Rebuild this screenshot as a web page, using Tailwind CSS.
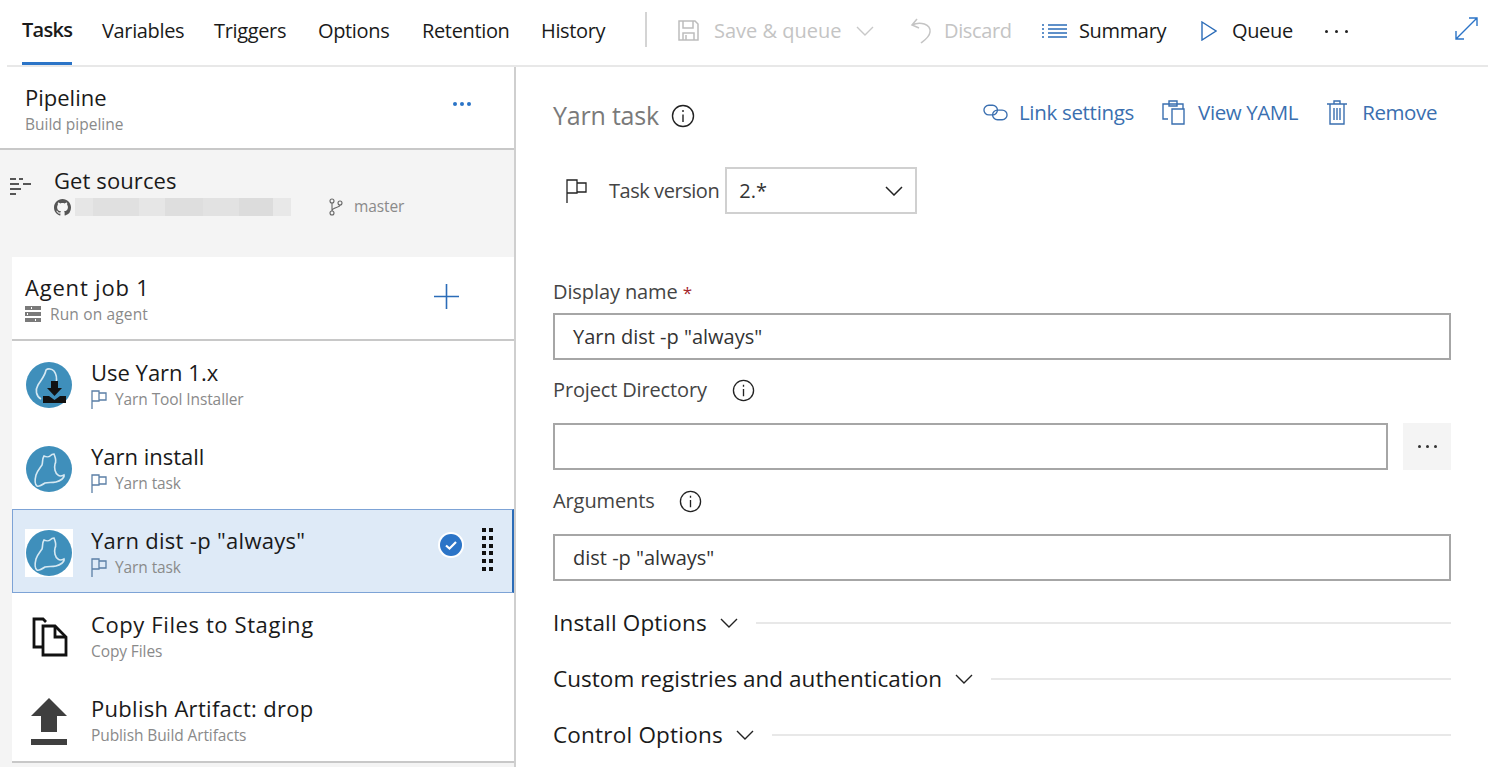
<!DOCTYPE html>
<html lang="en"><head><meta charset="utf-8"><script src="https://cdn.jsdelivr.net/npm/@tailwindcss/browser@4"></script><title>Yarn task</title></head>
<body class="bg-white">
<div class="w-[1488px] h-[767px] overflow-hidden font-['Open_Sans',sans-serif] text-[#1a1a1a]">
  <!-- top bar -->
  <header class="ml-[7px] h-[67px] border-b-2 border-[#e8e8e8] flex text-[20px] tracking-[-0.35px]">
    <div class="w-[50px] ml-[15px] h-[65px] flex items-center font-semibold border-b-[3px] border-[#2b74c7] pb-[2px] whitespace-nowrap tracking-[-0.7px]">Tasks</div>
    <div class="w-[112px] flex items-center ml-[30px] pb-[4px]">Variables</div>
    <div class="w-[104px] flex items-center pb-[4px]">Triggers</div>
    <div class="w-[104px] flex items-center pb-[4px]">Options</div>
    <div class="w-[119px] flex items-center pb-[4px]">Retention</div>
    <div class="w-[104px] flex items-center pb-[4px]">History</div>
    <div class="w-[2px] h-[35px] mt-[12px] bg-[#d4d4d4] mr-[31px]"></div>
    <div class="w-[232px] flex items-center gap-[13px] text-[#c4c4c4] pb-[4px]">
      <svg class="w-[21px] h-[21px] mr-[2px]" viewBox="0 0 21 21" fill="none" stroke="#bdbdbd" stroke-width="1.5"><path d="M1 1h16l3 3v16H1zM5 1v7h10V1M5 20v-7h11v7M8 15v5"/></svg>
      <span class="w-[129px] whitespace-nowrap tracking-[0px]">Save &amp; queue</span>
      <svg class="w-[18px] h-[10px]" viewBox="0 0 18 10" fill="none" stroke="#c8c8c8" stroke-width="1.4"><path d="M1 1l8 8 8-8"/></svg>
    </div>
    <div class="w-[132px] flex items-center gap-[12px] text-[#c4c4c4] pb-[4px]">
      <svg class="w-[22px] h-[26px]" viewBox="0 0 22 26" fill="none" stroke="#c4c4c4" stroke-width="1.5"><path d="M7 1L2 7l7 3M2 7c8-4 19-1 18 7-.5 5-5 8-9 11"/></svg>
      <span>Discard</span>
    </div>
    <div class="w-[159px] flex items-center gap-[12px] pb-[4px]">
      <svg class="w-[25px] h-[16px]" viewBox="0 0 25 16" fill="none" stroke="#2b6cb8" stroke-width="1.4"><path d="M6 2h19M6 6h19M6 10h19M6 14h19M0 2h2M0 6h2M0 10h2M0 14h2" /></svg>
      <span>Summary</span>
    </div>
    <div class="w-[124px] flex items-center gap-[15px] pb-[4px]">
      <svg class="w-[16px] h-[20px]" viewBox="0 0 16 20" fill="none" stroke="#2b6cb8" stroke-width="1.4"><path d="M1 1l14 9-14 9z"/></svg>
      <span>Queue</span>
    </div>
    <div class="w-[130px] flex items-center gap-[7px] pb-[3px]">
      <span class="w-[3px] h-[3px] rounded-full bg-[#222]"></span><span class="w-[3px] h-[3px] rounded-full bg-[#222]"></span><span class="w-[3px] h-[3px] rounded-full bg-[#222]"></span>
    </div>
    <svg class="w-[23px] h-[23px] mt-[17px]" viewBox="0 0 23 23" fill="none" stroke="#2b74c7" stroke-width="1.4"><path d="M1 22L22 1M14 1h8v8M1 14v8h8"/></svg>
  </header>

  <div class="flex h-[700px]">
    <!-- left panel -->
    <aside class="w-[516px] shrink-0 border-r-2 border-[#cfcfcf]">
      <div class="h-[83px] border-b-2 border-[#c8c8c8] flex justify-between pl-[25px] pr-[43px]">
        <div class="pt-[15px]">
          <div class="text-[22px] leading-[30px]">Pipeline</div>
          <div class="text-[15.500px] leading-[20px] text-[#8a8a8a] mt-[2px]">Build pipeline</div>
        </div>
        <div class="flex gap-[3px] pt-[35px]">
          <span class="w-[4px] h-[4px] rounded-full bg-[#2b74c7]"></span><span class="w-[4px] h-[4px] rounded-full bg-[#2b74c7]"></span><span class="w-[4px] h-[4px] rounded-full bg-[#2b74c7]"></span>
        </div>
      </div>
      <div class="bg-[#f4f4f4] pl-[12px] h-[617px]">
        <div class="h-[107px] -ml-[12px] flex">
          <svg class="w-[22px] h-[18px] ml-[10px] mt-[27px] shrink-0" viewBox="0 0 22 18" fill="none" stroke="#222" stroke-width="1.5"><path d="M0 2h6M9 2h4M0 7h9M13 7h8M0 12h11M0 17h6"/></svg>
          <div class="ml-[22px] pt-[15px]">
            <div class="text-[22px] leading-[30px] tracking-[0.1px]">Get sources</div>
            <div class="flex items-center text-[15.500px] text-[#8a8a8a] h-[20px] mt-[2px]">
              <svg class="w-[17px] h-[17px]" viewBox="0 0 16 16" fill="#555"><path d="M8 0C3.58 0 0 3.58 0 8c0 3.54 2.29 6.53 5.47 7.59.4.07.55-.17.55-.38 0-.19-.01-.82-.01-1.49-2.01.37-2.53-.49-2.69-.94-.09-.23-.48-.94-.82-1.13-.28-.15-.68-.52-.01-.53.63-.01 1.08.58 1.23.82.72 1.21 1.87.87 2.33.66.07-.52.28-.87.51-1.07-1.78-.2-3.64-.89-3.64-3.95 0-.87.31-1.59.82-2.15-.08-.2-.36-1.02.08-2.12 0 0 .67-.21 2.2.82.64-.18 1.32-.27 2-.27s1.36.09 2 .27c1.53-1.04 2.2-.82 2.2-.82.44 1.1.16 1.92.08 2.12.51.56.82 1.27.82 2.15 0 3.07-1.87 3.75-3.65 3.95.29.25.54.73.54 1.48 0 1.07-.01 1.93-.01 2.2 0 .21.15.46.55.38A8.01 8.01 0 0 0 16 8c0-4.42-3.58-8-8-8z"/></svg>
              <div class="w-[216px] h-[18px] ml-[4px] flex">
                <i class="w-[18px] bg-[#e6e6e6]"></i><i class="w-[46px] bg-[#e0e0e0]"></i><i class="w-[26px] bg-[#e6e6e6]"></i><i class="w-[38px] bg-[#dedede]"></i><i class="w-[36px] bg-[#e2e2e2]"></i><i class="w-[34px] bg-[#dcdcdc]"></i><i class="w-[18px] bg-[#e8e8e8]"></i>
              </div>
              <svg class="w-[14px] h-[18px] ml-[38px]" viewBox="0 0 14 18" fill="none" stroke="#666" stroke-width="1.1"><circle cx="3" cy="3" r="2"/><circle cx="3" cy="15" r="2"/><circle cx="11" cy="5" r="2"/><path d="M3 5v8M11 7c0 3-8 2-8 6"/></svg>
              <span class="ml-[11px] tracking-[-0.1px]">master</span>
            </div>
          </div>
        </div>
        <div class="bg-white h-[506px]">
          <div class="h-[84px] border-b-2 border-[#c8c8c8] flex justify-between pl-[13px] pr-[55px]">
            <div class="pt-[15px]">
              <div class="text-[22px] leading-[30px] tracking-[0.8px]">Agent job 1</div>
              <div class="flex items-center gap-[9px] text-[15.500px] leading-[20px] text-[#8a8a8a] tracking-[0.15px] mt-[2px]">
                <svg class="w-[16px] h-[17px]" viewBox="0 0 16 17" fill="#7a7a7a"><path d="M0 0h16v4H0zM0 6h16v4H0zM0 12h16v4H0z"/><path d="M6 1h1v2H6zM2 7h1v2H2zM10 13h1v2h-1z" fill="#fff"/></svg>
                <span>Run on agent</span>
              </div>
            </div>
            <svg class="w-[25px] h-[25px] mt-[27px]" viewBox="0 0 25 25" stroke="#2b6cb8" stroke-width="1.6"><path d="M0 12.5h25M12.5 0v25"/></svg>
          </div>
          <!-- rows -->
          <div class="h-[84px] flex pl-[13px]">
            <div class="w-[48px] h-[48px] mt-[20px] relative shrink-0">
              <svg class="w-[48px] h-[48px]" viewBox="0 0 48 48"><circle cx="24" cy="24" r="23" fill="#3f8fbb"/><path d="M31 22c1-4 1-8-2-12-2-2-6-3-8-1-1 6-5 10-8 15-3 5-2 11 3 14" fill="none" stroke="#d5e8f2" stroke-width="1.6"/></svg>
              <svg class="absolute left-[18px] top-[20px] w-[23px] h-[23px]" viewBox="0 0 23 23" fill="#111"><path d="M8 0h7v7h4l-7.500 8-7.500-8h4zM0 15h6l5.500 4 5.500-4h6v7H0z"/></svg>
            </div>
            <div class="ml-[18px] pt-[16px]">
              <div class="text-[22px] leading-[30px]">Use Yarn 1.x</div>
              <div class="flex items-center gap-[8px] text-[15.500px] leading-[20px] text-[#8a8a8a] tracking-[-0.1px] mt-[2px]">
                <svg class="w-[16px] h-[19px]" viewBox="0 0 16 19" fill="none" stroke="#5b7fa6" stroke-width="1.3"><path d="M1 19V1h7v10H1M8 3h7v7H8"/></svg>
                <span>Yarn Tool Installer</span>
              </div>
            </div>
          </div>
          <div class="h-[84px] flex pl-[13px]">
            <svg class="w-[48px] h-[48px] mt-[20px] shrink-0" viewBox="0 0 48 48"><circle cx="24" cy="24" r="23" fill="#3f8fbb"/><path d="M19 11c2 1 5 1 6 0 1-1 3-2 4-2 1 3 3 6 1 10-1 4 0 9 3 11 2 2 4 1 6 0 1 3-4 6-8 7-4 1-8 0-11 1-3 2-6 4-8 3-3-2-2-7-1-11 1-4 4-7 6-10 1-3 0-6 2-9z" fill="none" stroke="#d5e8f2" stroke-width="1.6"/></svg>
            <div class="ml-[18px] pt-[16px]">
              <div class="text-[22px] leading-[30px]">Yarn install</div>
              <div class="flex items-center gap-[8px] text-[15.500px] leading-[20px] text-[#8a8a8a] tracking-[-0.1px] mt-[2px]">
                <svg class="w-[16px] h-[19px]" viewBox="0 0 16 19" fill="none" stroke="#5b7fa6" stroke-width="1.3"><path d="M1 19V1h7v10H1M8 3h7v7H8"/></svg>
                <span>Yarn task</span>
              </div>
            </div>
          </div>
          <div class="h-[84px] flex pl-[12px] bg-[#deeaf7] border border-[#7da3d6] border-r-2 border-r-[#2b6cb8]">
            <div class="w-[48px] h-[48px] mt-[19px] shrink-0 bg-white">
              <svg class="w-[48px] h-[48px]" viewBox="0 0 48 48"><circle cx="24" cy="24" r="23" fill="#3f8fbb"/><path d="M19 11c2 1 5 1 6 0 1-1 3-2 4-2 1 3 3 6 1 10-1 4 0 9 3 11 2 2 4 1 6 0 1 3-4 6-8 7-4 1-8 0-11 1-3 2-6 4-8 3-3-2-2-7-1-11 1-4 4-7 6-10 1-3 0-6 2-9z" fill="none" stroke="#d5e8f2" stroke-width="1.6"/></svg>
            </div>
            <div class="ml-[18px] pt-[15px] flex-1">
              <div class="text-[22px] leading-[30px] tracking-[0.3px] whitespace-nowrap">Yarn dist -p "always"</div>
              <div class="flex items-center gap-[8px] text-[15.500px] leading-[20px] text-[#8a8a8a] tracking-[-0.1px] mt-[2px]">
                <svg class="w-[16px] h-[19px]" viewBox="0 0 16 19" fill="none" stroke="#5b7fa6" stroke-width="1.3"><path d="M1 19V1h7v10H1M8 3h7v7H8"/></svg>
                <span>Yarn task</span>
              </div>
            </div>
            <svg class="w-[26px] h-[26px] mt-[22px] mr-[18px]" viewBox="0 0 26 26"><circle cx="13" cy="13" r="13" fill="#fff"/><circle cx="13" cy="13" r="11" fill="#2b74c7"/><path d="M8 13.500l3.500 3L18 10" fill="none" stroke="#fff" stroke-width="2.200"/></svg>
            <div class="grid grid-cols-2 gap-x-[3px] gap-y-[3px] w-[11px] h-[44px] mt-[18px] mr-[19px]">
              <i class="size-[4px] bg-[#111]"></i><i class="size-[4px] bg-[#111]"></i><i class="size-[4px] bg-[#111]"></i><i class="size-[4px] bg-[#111]"></i><i class="size-[4px] bg-[#111]"></i><i class="size-[4px] bg-[#111]"></i><i class="size-[4px] bg-[#111]"></i><i class="size-[4px] bg-[#111]"></i><i class="size-[4px] bg-[#111]"></i><i class="size-[4px] bg-[#111]"></i><i class="size-[4px] bg-[#111]"></i><i class="size-[4px] bg-[#111]"></i>
            </div>
          </div>
          <div class="h-[84px] flex pl-[13px]">
            <svg class="w-[48px] h-[48px] mt-[21px] shrink-0" viewBox="0 0 48 48" fill="none" stroke="#111" stroke-width="2.800"><path d="M21 8l-3-3H9v28h9"/><path d="M18 12h12l11 11v18H18z"/><path d="M30 12v11h11" /></svg>
            <div class="ml-[18px] pt-[16px]">
              <div class="text-[22px] leading-[30px] tracking-[0.6px] whitespace-nowrap">Copy Files to Staging</div>
              <div class="text-[15.500px] leading-[20px] text-[#8a8a8a] tracking-[-0.1px] mt-[2px]">Copy Files</div>
            </div>
          </div>
          <div class="h-[86px] flex pl-[13px] border-b-2 border-[#c8c8c8]">
            <svg class="w-[48px] h-[48px] mt-[21px] shrink-0" viewBox="0 0 48 48" fill="#3f3f3f"><path d="M24 0L42 18H32V34H16V18H6z"/><path d="M6 41h36v6H6z"/></svg>
            <div class="ml-[18px] pt-[16px]">
              <div class="text-[22px] leading-[30px] tracking-[0.3px] whitespace-nowrap">Publish Artifact: drop</div>
              <div class="text-[15.500px] leading-[20px] text-[#8a8a8a] tracking-[-0.1px] mt-[2px]">Publish Build Artifacts</div>
            </div>
          </div>
        </div>
      </div>
    </aside>

    <!-- right panel -->
    <main class="flex-1 pl-[37px] pr-[37px]">
      <div class="h-[100px] flex">
        <div class="flex items-center gap-[12px] h-[98px]">
          <span class="text-[25px] text-[#7a7a7a] tracking-[-0.2px]">Yarn task</span>
          <svg class="w-[24px] h-[24px]" viewBox="0 0 24 24" fill="none" stroke="#222" stroke-width="1.4"><circle cx="12" cy="12" r="10.500"/><path d="M12 10.500V18M12 6v2"/></svg>
        </div>
        <div class="ml-auto flex items-center text-[20.500px] text-[#3a6fb0] h-[90px] pr-[14px] tracking-[-0.4px]">
          <svg class="w-[25px] h-[17px] mr-[11px]" viewBox="0 0 26 17" fill="none" stroke="#3a6fb0" stroke-width="1.400"><rect x="1" y="1" width="14" height="10" rx="5"/><rect x="10" y="6" width="15" height="10" rx="5"/></svg>
          <span class="mr-[28px] tracking-[-0.3px]">Link settings</span>
          <svg class="w-[23px] h-[26px] mr-[13px]" viewBox="0 0 23 26" fill="none" stroke="#3a6fb0" stroke-width="1.400"><path d="M6 20H1V5h20v5M7 2h8v5H7zM10 10h12v15H10z"/></svg>
          <span class="mr-[29px]">View YAML</span>
          <svg class="w-[20px] h-[25px] mr-[15px]" viewBox="0 0 20 25" fill="none" stroke="#3a6fb0" stroke-width="1.400"><path d="M0 4h20M7 4V1h6v3M3 4v20h14V4M7 8v12M10 8v12M13 8v12"/></svg>
          <span>Remove</span>
        </div>
      </div>
      <div class="flex items-center h-[47px] pl-[13px]">
        <svg class="w-[21px] h-[24px] mr-[22px]" viewBox="0 0 21 24" fill="none" stroke="#222" stroke-width="1.300"><path d="M1 24V1h10v13H1M11 4h9v9h-9"/></svg>
        <span class="text-[20px] mr-[6px] text-[#444] tracking-[-0.45px]">Task version</span>
        <div class="w-[192px] h-[47px] border-2 border-[#d0d0d0] flex items-center justify-between pl-[12px] pr-[12px] text-[20px] text-[#333]">
          <span>2.*</span>
          <svg class="w-[18px] h-[10px]" viewBox="0 0 18 10" fill="none" stroke="#222" stroke-width="1.500"><path d="M1 1l8 8 8-8"/></svg>
        </div>
      </div>
      <div class="mt-[63px] h-[30px] leading-[30px] text-[20px] text-[#444] tracking-[-0.1px]">Display name <span class="text-[#a4262c] text-[17px]">*</span></div>
      <div class="mt-[6px] h-[47px] border-2 border-[#a6a6a6] flex items-center px-[18px] text-[20px] text-[#333]">Yarn dist -p "always"</div>
      <div class="mt-[15px] h-[30px] flex items-center gap-[25px] text-[20px] text-[#444] tracking-[-0.15px]"><span>Project Directory</span><svg class="w-[23px] h-[23px]" viewBox="0 0 24 24" fill="none" stroke="#222" stroke-width="1.400"><circle cx="12" cy="12" r="10.500"/><path d="M12 10.500V18M12 6v2"/></svg></div>
      <div class="mt-[18px] h-[47px] flex gap-[15px]">
        <div class="flex-1 border-2 border-[#a6a6a6]"></div>
        <div class="w-[48px] bg-[#f4f4f4] flex items-center justify-center gap-[5px]"><i class="size-[3px] rounded-full bg-[#333]"></i><i class="size-[3px] rounded-full bg-[#333]"></i><i class="size-[3px] rounded-full bg-[#333]"></i></div>
      </div>
      <div class="mt-[16px] h-[30px] flex items-center gap-[24px] text-[20px] text-[#444] tracking-[-0.1px]"><span>Arguments</span><svg class="w-[23px] h-[23px]" viewBox="0 0 24 24" fill="none" stroke="#222" stroke-width="1.400"><circle cx="12" cy="12" r="10.500"/><path d="M12 10.500V18M12 6v2"/></svg></div>
      <div class="mt-[18px] h-[47px] border-2 border-[#a6a6a6] flex items-center px-[18px] text-[20px] text-[#333]">dist -p "always"</div>
      <div class="mt-[27px] h-[30px] flex items-center text-[22.500px]"><span class="tracking-[0.15px]">Install Options</span><svg class="w-[18px] h-[10px] ml-[13px] shrink-0" viewBox="0 0 18 10" fill="none" stroke="#222" stroke-width="1.400"><path d="M1 1l8 8 8-8"/></svg><div class="flex-1 h-[2px] bg-[#e8e8e8] ml-[18px]"></div></div>
      <div class="mt-[26px] h-[30px] flex items-center text-[22.500px]"><span class="tracking-[0.03px]">Custom registries and authentication</span><svg class="w-[18px] h-[10px] ml-[13px] shrink-0" viewBox="0 0 18 10" fill="none" stroke="#222" stroke-width="1.400"><path d="M1 1l8 8 8-8"/></svg><div class="flex-1 h-[2px] bg-[#e8e8e8] ml-[18px]"></div></div>
      <div class="mt-[26px] h-[30px] flex items-center text-[22.500px]"><span class="tracking-[0.2px]">Control Options</span><svg class="w-[18px] h-[10px] ml-[13px] shrink-0" viewBox="0 0 18 10" fill="none" stroke="#222" stroke-width="1.400"><path d="M1 1l8 8 8-8"/></svg><div class="flex-1 h-[2px] bg-[#e8e8e8] ml-[18px]"></div></div>
    </main>
  </div>
</div>
</body></html>
